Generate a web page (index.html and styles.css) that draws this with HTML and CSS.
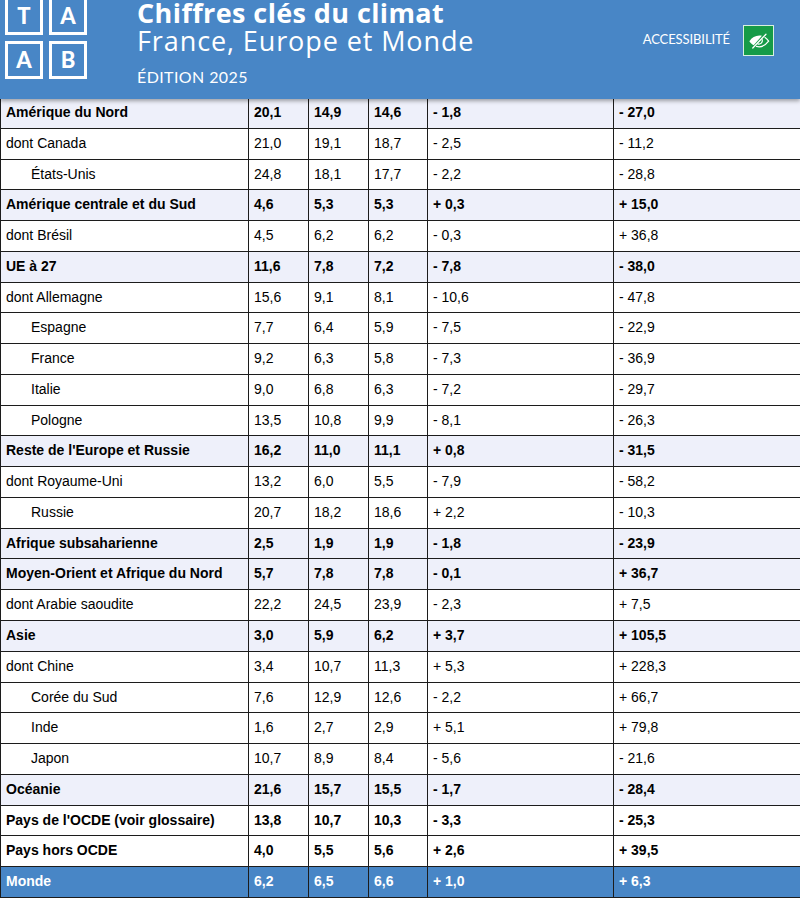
FILE: index.html
```html
<!DOCTYPE html>
<html lang="fr">
<head>
<meta charset="utf-8">
<title>Chiffres clés du climat</title>
<link rel="stylesheet" href="styles.css">
</head>
<body>
<header class="topbar">
  <div class="logo">
    <span class="logo-box">T</span>
    <span class="logo-box">A</span>
    <span class="logo-box">A</span>
    <span class="logo-box">B</span>
  </div>
  <div class="titles">
    <div class="title-main">Chiffres clés du climat</div>
    <div class="title-sub">France, Europe et Monde</div>
    <div class="title-edition">ÉDITION 2025</div>
  </div>
  <div class="access">
    <span class="access-label">ACCESSIBILITÉ</span>
    <span class="access-icon">
      <svg viewBox="0 0 24 24" width="22" height="22" aria-hidden="true">
        <path d="M1.5 12.2 C4.5 7.6 9.5 5.2 15.2 6.3 L6.2 16.6 C4.2 15.6 2.7 14 1.5 12.2 Z" fill="#fff"/>
        <path d="M9.2 17.9 C14.2 19.2 19.2 16.6 22.5 12.2 C21.4 10.6 20.1 9.3 18.6 8.3" fill="none" stroke="#fff" stroke-width="1.3" stroke-linecap="round"/>
        <path d="M10.8 15.2 C13.6 16 16.2 13.6 15.6 10.6" fill="none" stroke="#fff" stroke-width="1.3" stroke-linecap="round"/>
        <path d="M5.2 19.6 L19.6 4.6" fill="none" stroke="#fff" stroke-width="1.4" stroke-linecap="round"/>
      </svg>
    </span>
  </div>
</header>
<main class="content">
  <table class="data">
    <colgroup>
      <col class="c-name"><col class="c-num"><col class="c-num"><col class="c-num3"><col class="c-var"><col class="c-var2">
    </colgroup>
    <tbody>
      <tr class="region"><td>Amérique du Nord</td><td>20,1</td><td>14,9</td><td>14,6</td><td>- 1,8</td><td>- 27,0</td></tr>
      <tr><td>dont Canada</td><td>21,0</td><td>19,1</td><td>18,7</td><td>- 2,5</td><td>- 11,2</td></tr>
      <tr><td class="indent">États-Unis</td><td>24,8</td><td>18,1</td><td>17,7</td><td>- 2,2</td><td>- 28,8</td></tr>
      <tr class="region"><td>Amérique centrale et du Sud</td><td>4,6</td><td>5,3</td><td>5,3</td><td>+ 0,3</td><td>+ 15,0</td></tr>
      <tr><td>dont Brésil</td><td>4,5</td><td>6,2</td><td>6,2</td><td>- 0,3</td><td>+ 36,8</td></tr>
      <tr class="region"><td>UE à 27</td><td>11,6</td><td>7,8</td><td>7,2</td><td>- 7,8</td><td>- 38,0</td></tr>
      <tr><td>dont Allemagne</td><td>15,6</td><td>9,1</td><td>8,1</td><td>- 10,6</td><td>- 47,8</td></tr>
      <tr><td class="indent">Espagne</td><td>7,7</td><td>6,4</td><td>5,9</td><td>- 7,5</td><td>- 22,9</td></tr>
      <tr><td class="indent">France</td><td>9,2</td><td>6,3</td><td>5,8</td><td>- 7,3</td><td>- 36,9</td></tr>
      <tr><td class="indent">Italie</td><td>9,0</td><td>6,8</td><td>6,3</td><td>- 7,2</td><td>- 29,7</td></tr>
      <tr><td class="indent">Pologne</td><td>13,5</td><td>10,8</td><td>9,9</td><td>- 8,1</td><td>- 26,3</td></tr>
      <tr class="region"><td>Reste de l'Europe et Russie</td><td>16,2</td><td>11,0</td><td>11,1</td><td>+ 0,8</td><td>- 31,5</td></tr>
      <tr><td>dont Royaume-Uni</td><td>13,2</td><td>6,0</td><td>5,5</td><td>- 7,9</td><td>- 58,2</td></tr>
      <tr><td class="indent">Russie</td><td>20,7</td><td>18,2</td><td>18,6</td><td>+ 2,2</td><td>- 10,3</td></tr>
      <tr class="region"><td>Afrique subsaharienne</td><td>2,5</td><td>1,9</td><td>1,9</td><td>- 1,8</td><td>- 23,9</td></tr>
      <tr class="region"><td>Moyen-Orient et Afrique du Nord</td><td>5,7</td><td>7,8</td><td>7,8</td><td>- 0,1</td><td>+ 36,7</td></tr>
      <tr><td>dont Arabie saoudite</td><td>22,2</td><td>24,5</td><td>23,9</td><td>- 2,3</td><td>+ 7,5</td></tr>
      <tr class="region"><td>Asie</td><td>3,0</td><td>5,9</td><td>6,2</td><td>+ 3,7</td><td>+ 105,5</td></tr>
      <tr><td>dont Chine</td><td>3,4</td><td>10,7</td><td>11,3</td><td>+ 5,3</td><td>+ 228,3</td></tr>
      <tr><td class="indent">Corée du Sud</td><td>7,6</td><td>12,9</td><td>12,6</td><td>- 2,2</td><td>+ 66,7</td></tr>
      <tr><td class="indent">Inde</td><td>1,6</td><td>2,7</td><td>2,9</td><td>+ 5,1</td><td>+ 79,8</td></tr>
      <tr><td class="indent">Japon</td><td>10,7</td><td>8,9</td><td>8,4</td><td>- 5,6</td><td>- 21,6</td></tr>
      <tr class="region"><td>Océanie</td><td>21,6</td><td>15,7</td><td>15,5</td><td>- 1,7</td><td>- 28,4</td></tr>
      <tr class="group"><td>Pays de l'OCDE (voir glossaire)</td><td>13,8</td><td>10,7</td><td>10,3</td><td>- 3,3</td><td>- 25,3</td></tr>
      <tr class="group"><td>Pays hors OCDE</td><td>4,0</td><td>5,5</td><td>5,6</td><td>+ 2,6</td><td>+ 39,5</td></tr>
      <tr class="total"><td>Monde</td><td>6,2</td><td>6,5</td><td>6,6</td><td>+ 1,0</td><td>+ 6,3</td></tr>
    </tbody>
  </table>
</main>
</body>
</html>
```

FILE: styles.css
```css
html, body {
  margin: 0;
  padding: 0;
  background: #ffffff;
}

body {
  width: 800px;
  height: 908px;
  overflow: hidden;
  font-family: "Liberation Sans", Arial, sans-serif;
  color: #000;
}

.topbar {
  position: relative;
  z-index: 2;
  height: 99px;
  background: #4886c6;
  box-shadow: 0 2px 4px rgba(0, 0, 0, 0.35);
  display: flex;
  align-items: flex-start;
  padding: 0 26px 0 5px;
  box-sizing: border-box;
  color: #fff;
  font-family: "Open Sans", Lato, sans-serif;
}

.logo {
  display: grid;
  grid-template-columns: 38px 38px;
  grid-auto-rows: 38px;
  gap: 6px;
  margin-top: -3px;
  flex: none;
}

.logo-box {
  box-sizing: border-box;
  border: 3px solid #fff;
  display: flex;
  align-items: center;
  justify-content: center;
  font-family: Lato, sans-serif;
  font-weight: 900;
  font-size: 22px;
  line-height: 1;
  color: #fff;
}

.titles {
  margin-left: 50px;
  flex: 1;
}

.title-main {
  font-weight: 700;
  font-size: 27px;
  line-height: 26px;
  letter-spacing: 0.4px;
  white-space: nowrap;
}

.title-sub {
  font-weight: 400;
  font-size: 27px;
  line-height: 30px;
  letter-spacing: 0.9px;
  white-space: nowrap;
}

.title-edition {
  margin-top: 11px;
  font-family: Lato, sans-serif;
  font-size: 16px;
  line-height: 20px;
  letter-spacing: 0.4px;
  font-weight: 400;
}

.access {
  display: flex;
  align-items: center;
  margin-top: 25px;
  gap: 13px;
  font-family: Lato, sans-serif;
}

.access-label {
  font-size: 13px;
  line-height: 16px;
  margin-top: -4px;
  letter-spacing: -0.1px;
}

.access-icon {
  box-sizing: border-box;
  width: 31px;
  height: 31px;
  background: #169b48;
  border: 1px solid #d9efe0;
  display: flex;
  align-items: center;
  justify-content: center;
}

.content {
  position: relative;
  z-index: 1;
}

.data {
  border-collapse: collapse;
  table-layout: fixed;
  width: 800px;
  margin-top: -2px;
  font-size: 14px;
}

.c-name { width: 248px; }
.c-num { width: 60px; }
.c-num3 { width: 59px; }
.c-var { width: 186px; }
.c-var2 { width: 187px; }

.data td {
  border: 1px solid #1c1c1c;
  padding: 7px 5px;
  line-height: 15.76px;
  white-space: nowrap;
  text-align: left;
  vertical-align: middle;
}

.data td.indent {
  padding-left: 30px;
}

.region td {
  background: #eef0fa;
  font-weight: 700;
}

.group td {
  font-weight: 700;
}

.total td {
  background: #4886c6;
  color: #fff;
  font-weight: 700;
}
```
